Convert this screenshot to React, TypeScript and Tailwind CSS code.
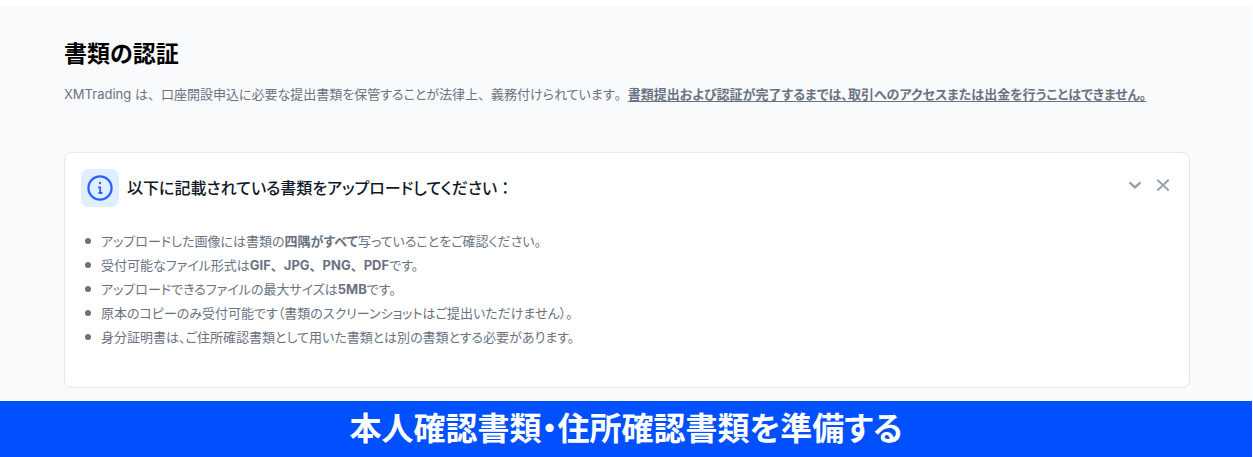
import type { ReactNode } from 'react';

interface PageHeaderProps {
  title: string;
  children: ReactNode;
}

function PageHeader({ title, children }: PageHeaderProps) {
  return (
    <header>
      <h1 className="text-[23px] leading-8 font-bold text-black">{title}</h1>
      <p className="mt-3 text-[13px] leading-6 text-gray-500">{children}</p>
    </header>
  );
}

/** Keeps punctuation at full width, unlike the proportional kana around it. */
function FullWidth({ children }: { children: ReactNode }) {
  return <span className="[font-feature-settings:normal]">{children}</span>;
}

function InfoIcon() {
  return (
    <span className="flex size-[38px] shrink-0 items-center justify-center rounded-lg bg-[#e0efff]">
      <svg viewBox="0 0 26 26" className="size-[26px]" fill="none" stroke="#2962ff" aria-hidden="true">
        <circle cx="13" cy="13" r="11.6" strokeWidth="2.2" />
        <path d="M11 12.3h2.2v5.6M11.4 18h4" strokeWidth="1.8" />
        <circle cx="13" cy="8" r="1.2" fill="#2962ff" stroke="none" />
      </svg>
    </span>
  );
}

const REQUIREMENTS: ReactNode[] = [
  <>
    アップロードした画像には書類の<strong>四隅がすべて</strong>写っていることをご確認ください。
  </>,
  <>
    受付可能なファイル形式は
    <strong>
      <FullWidth>GIF、JPG、PNG、PDF</FullWidth>
    </strong>
    です。
  </>,
  <>
    アップロードできるファイルの最大サイズは<strong>5MB</strong>です。
  </>,
  <>原本のコピーのみ受付可能です（書類のスクリーンショットはご提出いただけません）。</>,
  <>身分証明書は、ご住所確認書類として用いた書類とは別の書類とする必要があります。</>,
];

function UploadNotice() {
  return (
    <section className="mt-[46px] rounded-lg border border-gray-200 bg-white px-4 pt-4 pb-[38px]">
      <div className="flex items-center gap-2">
        <InfoIcon />
        <h2 className="flex-1 text-base leading-6 font-medium text-gray-900">
          以下に記載されている書類をアップロードしてください<FullWidth>：</FullWidth>
        </h2>
        <div className="flex items-center gap-3 pr-0.5 pb-1.5 text-gray-400">
          <button type="button" aria-label="折りたたむ" className="flex size-4 items-center justify-center">
            <svg viewBox="0 0 16 16" className="size-4" fill="none" stroke="currentColor" strokeWidth="2.4">
              <path d="M2.5 5.3 8 10.3l5.5-5" />
            </svg>
          </button>
          <button type="button" aria-label="閉じる" className="flex size-4 items-center justify-center">
            <svg viewBox="0 0 16 16" className="size-4" fill="none" stroke="currentColor" strokeWidth="2">
              <path d="m2.3 2.8 11.4 10.7M13.7 2.8 2.3 13.5" />
            </svg>
          </button>
        </div>
      </div>
      <ul className="mt-[22px] text-[13px] leading-6 text-gray-500">
        {REQUIREMENTS.map((item, index) => (
          <li key={index} className="flex items-center gap-2.5 pl-1">
            <span className="size-[6px] shrink-0 rounded-full bg-gray-500" />
            <span>{item}</span>
          </li>
        ))}
      </ul>
    </section>
  );
}

export default function App() {
  return (
    <div className="bg-white pt-[6px] pr-px font-['Inter','Noto_Sans_CJK_JP',sans-serif] [font-feature-settings:'palt']">
      <main className="bg-[#f9fafc] pt-8 pr-[62px] pb-[13px] pl-16">
        <PageHeader title="書類の認証">
          XMTrading は<FullWidth>、</FullWidth>口座開設申込に必要な提出書類を保管することが法律上
          <FullWidth>、</FullWidth>義務付けられています<FullWidth>。</FullWidth>
          <strong className="underline underline-offset-2">
            書類提出および認証が完了するまでは、取引へのアクセスまたは出金を行うことはできません。
          </strong>
        </PageHeader>
        <UploadNotice />
      </main>
      <div className="bg-[#0050ff] py-2 text-center text-[32px] leading-10 font-bold text-white">
        本人確認書類・住所確認書類を準備する
      </div>
    </div>
  );
}
